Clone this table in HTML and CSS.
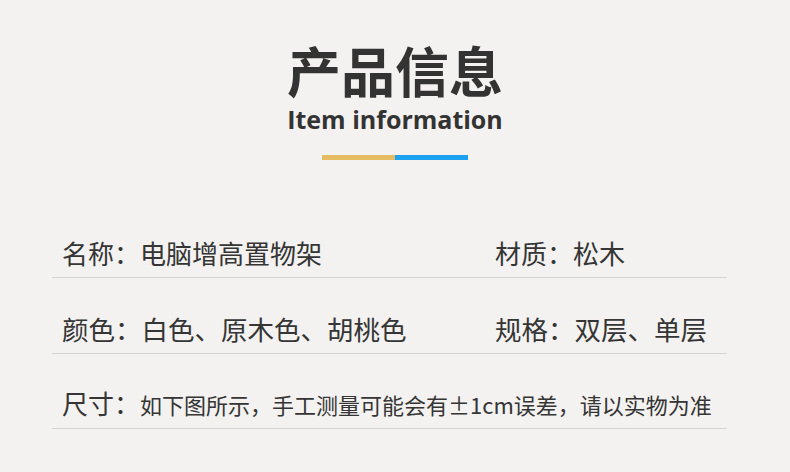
FILE: index.html
```html
<!DOCTYPE html>
<html lang="zh-CN">
<head>
<meta charset="utf-8">
<title>产品信息</title>
<link rel="stylesheet" href="styles.css">
</head>
<body>
<div class="page">
  <header class="head">
    <h1 class="title">产品信息</h1>
    <p class="subtitle">Item information</p>
    <div class="bar"><span class="bar-gold"></span><span class="bar-blue"></span></div>
  </header>
  <section class="info">
    <div class="row">
      <div class="cell"><span class="label">名称：</span>电脑增高置物架</div>
      <div class="cell"><span class="label">材质：</span>松木</div>
    </div>
    <div class="row row-wide">
      <div class="cell"><span class="label">颜色：</span>白色、原木色、胡桃色</div>
      <div class="cell"><span class="label">规格：</span>双层、单层</div>
    </div>
    <div class="row row-full">
      <div class="cell"><span class="label">尺寸：</span><span class="small">如下图所示，手工测量可能会有±1cm误差，请以实物为准</span></div>
    </div>
  </section>
</div>
</body>
</html>
```
FILE: styles.css
```css
html, body {
  margin: 0;
  padding: 0;
  background: #f3f2f0;
}
.page {
  width: 790px;
  height: 472px;
  overflow: hidden;
  font-family: "Noto Sans CJK SC", "Noto Sans", sans-serif;
  color: #333;
}
.head {
  display: flex;
  flex-direction: column;
  align-items: center;
  padding-top: 42px;
}
.title {
  margin: 0;
  font-size: 54px;
  line-height: 56px;
  font-weight: 700;
  color: #333;
}
.subtitle {
  margin: 6px 0 0;
  font-family: "Open Sans", "Noto Sans", sans-serif;
  font-size: 25px;
  line-height: 30px;
  font-weight: 700;
  color: #333;
}
.bar {
  display: flex;
  margin-top: 21px;
}
.bar-gold, .bar-blue {
  display: block;
  width: 73px;
  height: 5px;
}
.bar-gold { background: #e5bb64; }
.bar-blue { background: #1da1f2; }
.info {
  margin: 43px 0 0 52px;
  width: 675px;
}
.row {
  display: grid;
  grid-template-columns: 433px 1fr;
  height: 75px;
  align-items: end;
  border-bottom: 1px solid #d5d4d2;
  padding-left: 10px;
  box-sizing: border-box;
}
.row + .row { height: 75.5px; }
.row-full { grid-template-columns: 1fr; }
.cell {
  font-size: 26px;
  line-height: 36px;
  padding-bottom: 6px;
  color: #353535;
  white-space: nowrap;
}
.row-wide .cell {
  font-size: 26.5px;
}
.small {
  font-size: 22px;
}
```
